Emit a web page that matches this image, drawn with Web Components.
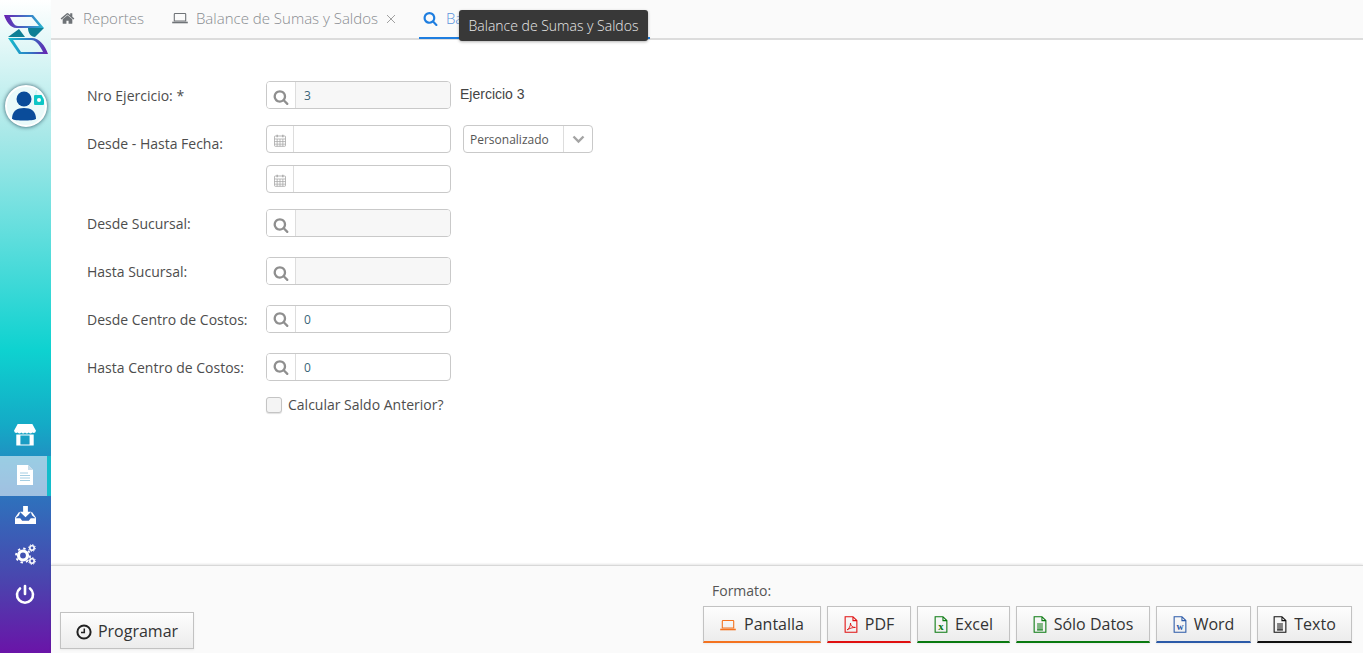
<!DOCTYPE html>
<html lang="es"><head><meta charset="utf-8"><title>Balance de Sumas y Saldos</title>
<style>
html,body{margin:0;height:100%;overflow:hidden;background:#fff;font-family:"Open Sans",sans-serif}
</style></head><body>
<app-shell>
  <side-bar slot="side"></side-bar>
  <tab-bar slot="tabs">
    <tab-item icon="home">Reportes</tab-item>
    <tab-item icon="laptop" closable>Balance de Sumas y Saldos</tab-item>
    <tab-item icon="search" active closable tip="Balance de Sumas y Saldos">Balance de Sumas y Saldos</tab-item>
  </tab-bar>
  <report-form slot="main">
    <form-row label="Nro Ejercicio: *" nudge="1"><lookup-field value="3" readonly></lookup-field><span style="font:14px 'Liberation Sans',sans-serif;color:#444;margin:-2px 0 0 9px;align-self:center">Ejercicio 3</span></form-row>
    <form-row label="Desde - Hasta Fecha:" nudge="5" gap="16"><date-field></date-field><select-box value="Personalizado"></select-box></form-row>
    <form-row gap="12"><date-field></date-field></form-row>
    <form-row label="Desde Sucursal:" nudge="1" gap="16"><lookup-field readonly></lookup-field></form-row>
    <form-row label="Hasta Sucursal:" nudge="1" gap="20"><lookup-field readonly></lookup-field></form-row>
    <form-row label="Desde Centro de Costos:" nudge="1" gap="20"><lookup-field value="0"></lookup-field></form-row>
    <form-row label="Hasta Centro de Costos:" nudge="1" gap="20"><lookup-field value="0"></lookup-field></form-row>
    <check-row gap="16">Calcular Saldo Anterior?</check-row>
  </report-form>
  <foot-bar slot="foot">
    <action-button slot="left" icon="clock">Programar</action-button>
    <action-button icon="laptop" color="#f47320" w="118">Pantalla</action-button>
    <action-button icon="pdf" color="#e01010" w="84">PDF</action-button>
    <action-button icon="excel" color="#0a7a10" w="93">Excel</action-button>
    <action-button icon="doc" color="#0a7a10" w="134">Sólo Datos</action-button>
    <action-button icon="word" color="#2b5aa8" w="95">Word</action-button>
    <action-button icon="doc" color="#111" w="95">Texto</action-button>
  </foot-bar>
</app-shell>
<script>
const FA=d=>`<svg viewBox="0 0 1792 1792" width="100%" height="100%" fill="currentColor"><path d="${d}"/></svg>`;
const SV=(b,vb="0 0 16 16")=>`<svg viewBox="${vb}" width="100%" height="100%" fill="none" stroke="currentColor" stroke-width="1.1">${b}</svg>`;
const FILE=`<path d="M2 1h8l4 4v12H2zM10 1v4h4"/>`;
const ICONS={
 home:FA("M1472 992v480q0 26-19 45t-45 19h-384v-384h-256v384h-384q-26 0-45-19t-19-45v-480q0-1 .5-3t.5-3l575-474 575 474q1 2 1 6zm223-69l-62 74q-8 9-21 11h-3q-13 0-21-7l-692-577-692 577q-12 8-24 7-13-2-21-11l-62-74q-8-10-7-23.500t11-21.500l719-599q32-26 76-26t76 26l244 204v-195q0-14 9-23t23-9h192q14 0 23 9t9 23v408l219 182q10 8 11 21.500t-7 23.500z"),
 search:FA("M1216 832q0-185-131.500-316.500t-316.500-131.500-316.500 131.500-131.500 316.500 131.500 316.500 316.500 131.500 316.500-131.500 131.500-316.500zm512 832q0 52-38 90t-90 38q-54 0-90-38l-343-342q-179 124-399 124-143 0-273.500-55.500t-225-150-150-225-55.500-273.500 55.500-273.500 150-225 225-150 273.500-55.500 273.500 55.500 225 150 150 225 55.500 273.500q0 220-124 399l343 343q37 37 37 90z"),
 laptop:SV(`<path d="M3 3.500h10a.7.7 0 0 1 .7.7v6.800H2.300V4.200a.7.7 0 0 1 .7-.7z"/><path d="M.2 12.500h15.600" stroke-width="1.600"/>`),
 calendar:SV(`<rect x="1.500" y="2.500" width="13" height="12" rx="1" stroke-width="1"/><path d="M1.500 6h13M1.500 9h13M1.500 12h13M4.700 6v8.500M8 6v8.500M11.300 6v8.500" stroke-width=".9"/><path d="M4.700 1v3M11.300 1v3" stroke-width="1.500"/>`,"1 .5 14 14.500"),
 clock:SV(`<circle cx="8" cy="8" r="6.600" stroke-width="2"/><path d="M8.300 4.500v4H5" stroke-width="1.500"/>`),
 pdf:SV(FILE+`<path d="M4 14.500c2-1 3.500-4 3.500-7 0 3 2 4.500 5 4.500-3 0-6 1-8.500 2.500z" stroke-width=".9"/>`,"1 .3 14 17.400"),
 excel:SV(FILE+`<text x="8" y="14.800" text-anchor="middle" fill="currentColor" stroke="none" font-family="Liberation Serif,serif" font-weight="700" font-size="11">x</text>`,"1 .3 14 17.400"),
 word:SV(FILE+`<text x="8" y="14.800" text-anchor="middle" fill="currentColor" stroke="none" font-family="Liberation Serif,serif" font-weight="700" font-size="10">w</text>`,"1 .3 14 17.400"),
 doc:SV(FILE+`<path d="M5 8.500h6M5 10.500h6M5 12.500h6M5 14.500h6"/>`,"1 .3 14 17.400")
};
function def(name,css,html,init){
  customElements.define(name,class extends HTMLElement{
    connectedCallback(){
      if(this.shadowRoot)return;
      const r=this.attachShadow({mode:"open"});
      const a=n=>this.getAttribute(n);
      r.innerHTML=`<style>${css}</style>`+html(a,this);
      if(init)init(this,r,a);
    }
  });
}
def("app-shell",`:host{display:grid;grid-template-columns:51px 1fr;grid-template-rows:40px 1fr 88px;height:653px}
 .s{grid-row:1/4;display:block}`,
 ()=>`<div class="s"><slot name="side"></slot></div><slot name="tabs"></slot><slot name="main"></slot><slot name="foot"></slot>`);
def("side-bar",`:host{display:flex;flex-direction:column;height:653px;width:51px;color:#fff;position:relative;
  background:linear-gradient(180deg,#fff 0,#a8e8e8 135px,#0ed2d0 350px,#14aac6 425px,#2f70bc 500px,#4a45ae 580px,#6a14a8 653px)}
 .logo{display:block;margin:13px 0 0 2px;width:47px;height:42px}
 .av{box-sizing:border-box;width:42px;height:42px;border-radius:50%;background:#eafafa;border:2px solid #fff;box-shadow:0 0 4px rgba(0,40,60,.75);margin:30px 0 0 5px;position:relative;overflow:hidden;flex:none}
 .nav{margin-top:auto;margin-bottom:37px;display:flex;flex-direction:column}
 .it{height:40px;display:flex;align-items:center;justify-content:center;width:50px}
 .it svg{margin-top:-3px}
 .it.on{background:rgba(255,255,255,.55);box-sizing:border-box;width:51px;padding-right:1px;border-right:4px solid #14bccb}
 .it.on svg{margin-left:4px}
 svg{display:block}`,
 ()=>`<svg class="logo" viewBox="0 0 47 42"><defs>
   <linearGradient id="g1" x1="0" x2="1"><stop offset="0" stop-color="#6a1fb0"/><stop offset=".6" stop-color="#3d7ac8"/><stop offset="1" stop-color="#28b8d0"/></linearGradient>
   <linearGradient id="g2" x1="0" x2="1"><stop offset="0" stop-color="#14c0cc"/><stop offset=".55" stop-color="#2e78c4"/><stop offset="1" stop-color="#6a1fb0"/></linearGradient></defs>
   <path d="M2 2h29l11 13H14.500C8 15 4 8 2 2zM8 4c2 4 4 9 8 9h21L29.500 4z" fill="url(#g1)" fill-rule="evenodd"/>
   <path d="M6 24l11-8 6 8zM26 15h16l-9 9c-4 0-7-4-7-9z" fill="#0d7f95"/>
   <path d="M6 25h24c7 0 13 7 16 16H17zM11 27l8 12h22c-2-4-6-12-12-12z" fill="url(#g2)" fill-rule="evenodd"/>
 </svg>
 <div class="av"><svg viewBox="0 0 38 38" width="38" height="38"><circle cx="17" cy="12" r="7.500" fill="#0a4c9a"/><path d="M5 32c0-8 5-11 12-11s12 3 12 11c-3 2-21 2-24 0z" fill="#0a4c9a"/><path d="M29 8V5.500a3 3 0 0 1 6 0V8" fill="none" stroke="#bfeeee" stroke-width="1"/><rect x="27" y="8" width="10" height="10" rx="1" fill="#0dc6c6"/><circle cx="32" cy="13" r="2" fill="#fff"/></svg></div>
 <div class="nav">
  <div class="it"><svg width="22" height="23" viewBox="0 0 24 24" fill="#fff" preserveAspectRatio="none"><path d="M4 1h16l4 7a3 3 0 0 1-4 2 3 3 0 0 1-4 0 3 3 0 0 1-4 0 3 3 0 0 1-4 0 3 3 0 0 1-4 0 3 3 0 0 1-4-2z"/><path d="M2.500 12h19v11.500h-19zM7 13v9.500h10V13z" fill-rule="evenodd"/></svg></div>
  <div class="it on"><svg width="16" height="20" viewBox="0 0 16 20"><path d="M0 0h11l5 5v15H0z" fill="#fff"/><path d="M11 0l5 5h-5z" fill="#c6dcea"/><path d="M3 8h8M3 10.500h10M3 13h10M3 15.500h10" stroke="#a4cde2" stroke-width="1"/></svg></div>
  <div class="it"><svg width="21" height="18" viewBox="0 0 22 19" fill="#fff" preserveAspectRatio="none"><path d="M8.500 0h5v6h3.500L11 12 5 6h3.500z"/><path d="M4 6.500h1.500L4 10 .5 13h5l2 2.500h7l2-2.500h5L18 10l-1.500-3.500H18L22 12.500V19H0v-6.500z"/></svg></div>
  <div class="it"><svg width="21" height="21" viewBox="0 0 21 21" fill="none" stroke="#fff"><circle cx="8" cy="11.500" r="4.500" stroke-width="3.200"/><circle cx="8" cy="11.500" r="7" stroke-width="1.800" stroke-dasharray="2.400 3.100"/><circle cx="17" cy="4" r="2.200" stroke-width="1.600"/><circle cx="17" cy="4" r="3.400" stroke-width="1" stroke-dasharray="1.300 1.350"/><circle cx="17" cy="17" r="2.200" stroke-width="1.600"/><circle cx="17" cy="17" r="3.400" stroke-width="1" stroke-dasharray="1.300 1.350"/></svg></div>
  <div class="it"><svg width="20" height="21" viewBox="0 0 20 21" fill="none" stroke="#fff" stroke-width="2.600" stroke-linecap="round"><path d="M10 2v8"/><path d="M5 4.500a8 8 0 1 0 10 0"/></svg></div>
 </div>`);
def("tab-bar",`:host{display:flex;background:#fafafa;border-bottom:2px solid #dcdcdc;height:38px;padding-left:9px;position:relative;z-index:2}`,()=>`<slot></slot>`);
def("tab-item",`:host{display:flex;align-items:center;height:39px;flex:none;box-sizing:border-box;padding-bottom:4px;margin-right:28px;color:#888c90;font:300 15px "Open Sans",sans-serif;position:relative;white-space:nowrap}
 :host([active]){color:#5d94dc;margin-left:-5px;padding:0 4px 2px 4px;border-bottom:2px solid #1e7ee0}
 .i{width:15px;height:15px;margin-right:8px;flex:none;color:#6f7377}
 :host([icon=laptop]) .i{width:16px;height:16px}
 :host([active]) .i{color:#1e7ee0;}
 .x{margin-left:8px;width:10px;height:10px;color:#a0a0a0;position:relative;top:1px}
 .tip{position:absolute;left:40px;top:10px;height:31px;width:189px;box-sizing:border-box;background:#383838;color:#e8e8e8;border-radius:3px;font-size:14px;line-height:31px;text-align:center;box-shadow:0 1px 3px rgba(0,0,0,.3)}`,
 (a,el)=>`<span class="i">${ICONS[a("icon")]}</span><span><slot></slot></span>${el.hasAttribute("closable")?`<svg class="x" viewBox="0 0 10 10" stroke="currentColor" fill="none"><path d="M1 1l8 8M9 1l-8 8"/></svg>`:""}${a("tip")?`<div class="tip">${a("tip")}</div>`:""}`);
def("report-form",`:host{display:block;padding:41px 0 0 36px;background:#fff;overflow:hidden}`,()=>`<slot></slot>`);
def("form-row",`:host{display:flex;align-items:flex-start;height:28px}
 .l{width:179px;flex:none;font:14px/20px "Open Sans",sans-serif;color:#4d4d4d;white-space:nowrap}
 .c{display:flex}`,
 (a)=>`<div class="l" style="padding-top:${(+a("nudge")||0)+4}px">${a("label")||""}</div><div class="c"><slot></slot></div>`,
 (el,r,a)=>{el.style.marginTop=(a("gap")||0)+"px"});
def("lookup-field",`:host{display:flex;box-sizing:border-box;width:185px;height:28px;border:1px solid #c9c9c9;border-radius:4px;overflow:hidden;background:#fff;font:12px "Open Sans",sans-serif;color:#3a6478}
 .a{width:28px;flex:none;border-right:1px solid #ddd;display:flex;align-items:center;justify-content:center;background:#fff;color:#8f8f8f}
 .a span{width:16px;height:16px;display:block}
 :host([readonly]) .a span{margin-top:4px}
 .v{flex:1;padding-left:8px;line-height:28px}
 :host([readonly]) .v{background:#f7f7f7}`,
 a=>`<div class="a"><span>${ICONS.search}</span></div><div class="v">${a("value")||""}</div>`);
def("date-field",`:host{display:flex;box-sizing:border-box;width:185px;height:28px;border:1px solid #c9c9c9;border-radius:4px;background:#fff}
 .a{width:26px;flex:none;border-right:1px solid #ddd;display:flex;align-items:center;justify-content:center;color:#a8a8a8}
 .a span{width:12px;height:13px;display:block;margin-bottom:5px}`,
 ()=>`<div class="a"><span>${ICONS.calendar}</span></div>`);
def("select-box",`:host{display:flex;box-sizing:border-box;width:130px;height:28px;border:1px solid #c9c9c9;border-radius:4px;margin-left:12px;background:#fff;font:12px/28px "Open Sans",sans-serif;color:#555}
 .v{flex:1;padding-left:6px}
 .a{width:28px;border-left:1px solid #ddd;display:flex;align-items:center;justify-content:center;color:#a4a4a4}`,
 a=>`<div class="v">${a("value")}</div><div class="a"><svg width="13" height="9" viewBox="0 0 13 9" fill="none" stroke="currentColor" stroke-width="2.400"><path d="M1.500 1.500l5 5 5-5"/></svg></div>`);
def("check-row",`:host{display:flex;align-items:center;margin-left:179px;height:16px;font:14px "Open Sans",sans-serif;color:#4d4d4d}
 .b{box-sizing:border-box;width:16px;height:16px;border:1px solid #c4c4c4;border-radius:3px;background:#f4f4f4;margin-right:6px;box-shadow:0 1px 1px rgba(0,0,0,.12)}
 .t{padding-bottom:2px}`,
 ()=>`<div class="b"></div><span class="t"><slot></slot></span>`,
 (el,r,a)=>{el.style.marginTop=a("gap")+"px"});
def("foot-bar",`:host{display:flex;justify-content:space-between;align-items:flex-end;box-sizing:border-box;height:88px;background:#fafafa;border-top:1px solid #d8d8d8;box-shadow:0 -1px 2px rgba(0,0,0,.1);padding:0 11px 10px 9px;position:relative}
 .l{display:block;margin-bottom:-6px}
 .f{font:14px "Open Sans",sans-serif;color:#555;margin:0 0 6px 9px;line-height:19px}
 .r{display:flex;gap:6px}`,
 ()=>`<div class="l"><slot name="left"></slot></div><div><div class="f">Formato:</div><div class="r"><slot></slot></div></div>`);
def("action-button",`:host{display:flex;align-items:center;justify-content:center;box-sizing:border-box;height:37px;border:1px solid #c2c2c2;background:linear-gradient(#fdfdfd,#ececec);font:16px "Open Sans",sans-serif;color:#333;white-space:nowrap;box-shadow:0 1px 2px rgba(0,0,0,.06)}
 .i{width:14px;height:17px;margin-right:7px;display:block;flex:none}
 :host([icon=laptop]) .i{width:16px;height:16px;margin-right:8px}
 :host([icon=clock]) .i{width:16px;height:16px;margin-right:6px}`,
 a=>`<span class="i" style="color:${a("color")||"#222"}">${ICONS[a("icon")]}</span><span><slot></slot></span>`,
 (el,r,a)=>{
   el.style.width=(a("w")||134)+"px";
   if(a("color"))el.style.borderBottom="2px solid "+a("color");
 });
</script>
</body></html>
